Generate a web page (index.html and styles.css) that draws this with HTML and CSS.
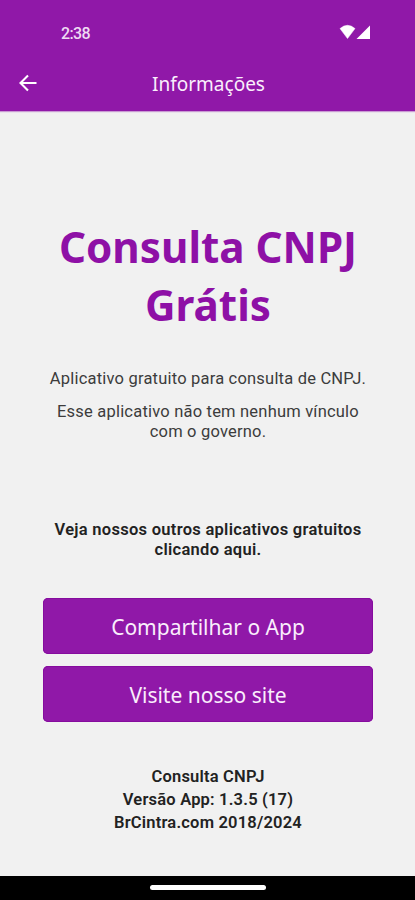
FILE: index.html
```
<!DOCTYPE html>
<html lang="pt-BR">
<head>
<meta charset="utf-8">
<title>Informações</title>
<link rel="stylesheet" href="styles.css">
</head>
<body>
<header class="top">
  <div class="status">
    <span class="clock">2:38</span>
    <svg class="signal" width="32" height="16" viewBox="0 0 32 16" fill="#fff"><path d="M1 4.6Q8.5 -2 16 4.6L8.5 14.5Z" stroke="#fff" stroke-width=".5" stroke-linejoin="round"/><path d="M31 1.5V15H17.5Z"/></svg>
  </div>
  <div class="bar">
    <svg class="back" width="18" height="18" viewBox="0 0 18 18" fill="none" stroke="#fff" stroke-width="2.1"><path d="M17.5 9H2M9 1.5L1.5 9L9 16.5"/></svg>
    <h1 class="title">Informações</h1>
  </div>
</header>
<main class="content">
  <h2 class="name">Consulta CNPJ<br>Grátis</h2>
  <p class="text">Aplicativo gratuito para consulta de CNPJ.</p>
  <p class="text">Esse aplicativo não tem nenhum vínculo<br>com o governo.</p>
  <p class="more">Veja nossos outros aplicativos gratuitos<br>clicando aqui.</p>
  <button class="button">Compartilhar o App</button>
  <button class="button">Visite nosso site</button>
  <div class="about">Consulta CNPJ<br>Versão App: 1.3.5 (17)<br>BrCintra.com 2018/2024</div>
</main>
<footer class="nav"><div class="handle"></div></footer>
</body>
</html>
```
FILE: styles.css
```
* { box-sizing: border-box; }
body { margin: 0; height: 900px; display: flex; flex-direction: column; background: #f1f1f1; font-family: Roboto, sans-serif; color: #3c3c3c; overflow: hidden; }
.top { height: 111px; background: #9018a8; color: #fff; box-shadow: 0 1px 1px #8e18a866; flex: none; }
.status { height: 56px; padding: 24px 44px 0 61px; display: flex; justify-content: space-between; }
.clock { font-size: 16px; line-height: 19px; font-weight: 500; letter-spacing: -.65px; color: #efdbf3; }
.bar { height: 55px; display: grid; grid-template-columns: 57px 1fr 55px; align-items: center; }
.back { margin: -2px 0 0 19px; }
.title { margin: 0; font: 400 19px/28px "Noto Sans", sans-serif; text-align: center; color: #faeefc; }
.content { flex: 1; padding: 107px 42px 0 43px; text-align: center; }
.name { margin: 0 -10px 35px; font: 700 42.2px/58px "Noto Sans", sans-serif; color: #8e10a6; }
.text { margin: 0 -10px 13px; font-size: 16.5px; line-height: 20px; letter-spacing: .2px; }
.more { margin: 78px -10px 38px; font-size: 16.5px; line-height: 20px; font-weight: 600; letter-spacing: .28px; color: #222; }
.button { display: block; width: 330px; height: 56px; margin: 0 0 12px; padding: 2px 0 0; border: 0; border-radius: 5px; background: #9018a8; color: #faeefc; font: 400 21px/28px "Noto Sans", sans-serif; box-shadow: inset 0 0 0 1px #860c9e; }
.about { margin-top: 44px; font-size: 16.5px; line-height: 22.8px; font-weight: 600; letter-spacing: .2px; color: #222; }
.nav { height: 24px; flex: none; background: #000; display: flex; justify-content: center; padding-top: 9px; }
.handle { width: 116px; height: 5px; border-radius: 3px; background: #fff; }
```
